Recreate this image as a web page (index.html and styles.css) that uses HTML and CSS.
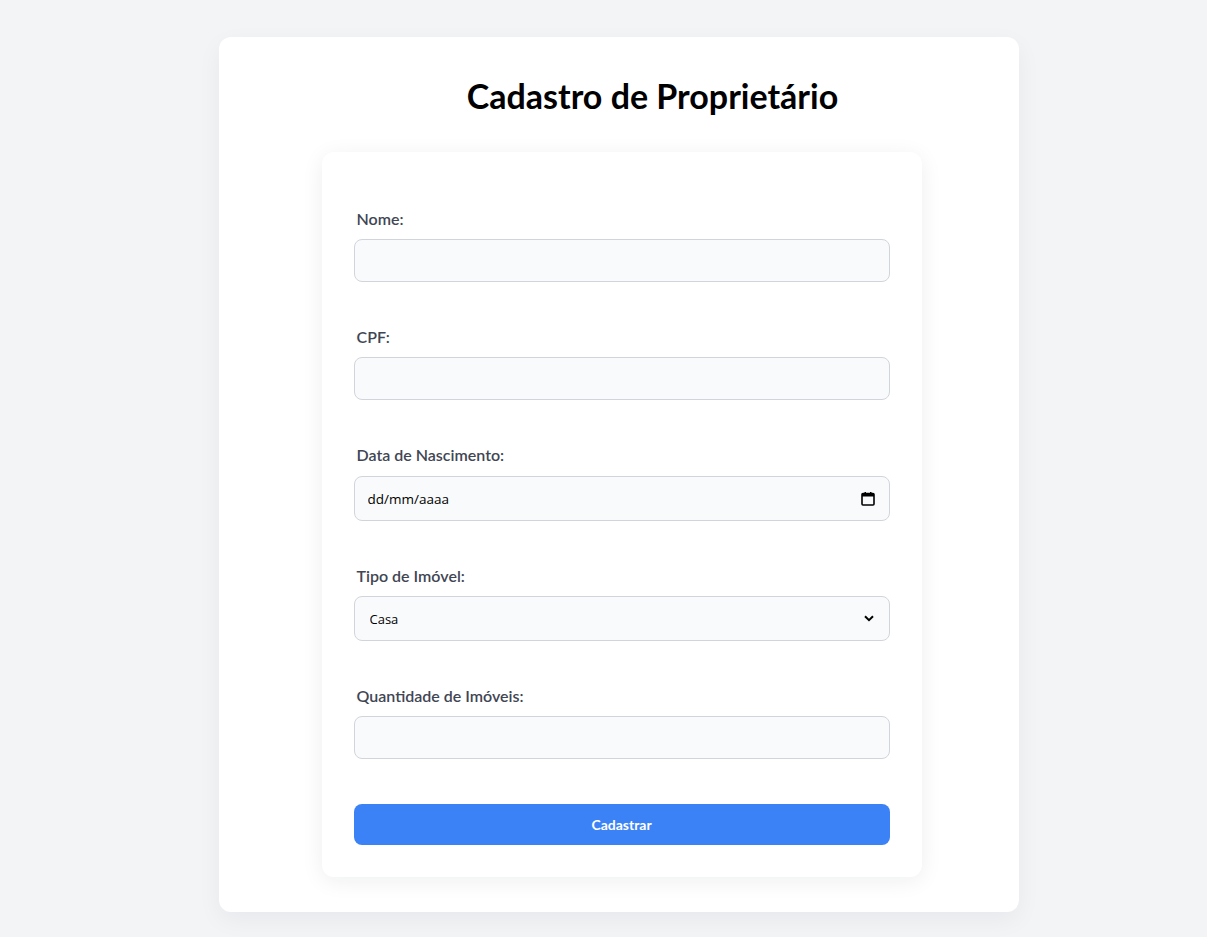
FILE: index.html
```html
<!DOCTYPE html>
<html lang="pt-BR">
<head>
<meta charset="utf-8">
<title>Cadastro de Proprietário</title>
<link rel="stylesheet" href="styles.css">
</head>
<body>
<main class="page">
  <section class="panel">
    <h1 class="title">Cadastro de Proprietário</h1>
    <form class="form-card">
      <div class="field">
        <label class="label" for="nome">Nome:</label>
        <input class="input" id="nome" type="text">
      </div>
      <div class="field">
        <label class="label" for="cpf">CPF:</label>
        <input class="input" id="cpf" type="text">
      </div>
      <div class="field">
        <label class="label" for="nasc">Data de Nascimento:</label>
        <div class="input input-tall input-wrap input-date">
          <input class="bare date-text" id="nasc" type="text" placeholder="dd/mm/aaaa">
          <svg class="cal-icon" width="14" height="14" viewBox="0 0 14 14" aria-hidden="true">
            <path d="M2 1.5h10a1 1 0 0 1 1 1v9.5a1 1 0 0 1-1 1H2a1 1 0 0 1-1-1V2.5a1 1 0 0 1 1-1z" fill="none" stroke="#000" stroke-width="1.6"/>
            <rect x="1" y="1.5" width="12" height="3" fill="#000"/>
            <rect x="3.5" y="0" width="1.5" height="2" fill="#000"/>
            <rect x="9" y="0" width="1.5" height="2" fill="#000"/>
          </svg>
        </div>
      </div>
      <div class="field">
        <label class="label" for="tipo">Tipo de Imóvel:</label>
        <div class="input input-tall input-wrap">
          <select class="bare select" id="tipo">
            <option>Casa</option>
            <option>Apartamento</option>
          </select>
          <svg class="chev-icon" width="10" height="7" viewBox="0 0 10 7" aria-hidden="true">
            <path d="M1 1.2l4 4 4-4" fill="none" stroke="#000" stroke-width="2"/>
          </svg>
        </div>
      </div>
      <div class="field">
        <label class="label" for="qtd">Quantidade de Imóveis:</label>
        <input class="input" id="qtd" type="text">
      </div>
      <button class="btn" type="button">Cadastrar</button>
    </form>
  </section>
</main>
</body>
</html>
```

FILE: styles.css
```css
* { box-sizing: border-box; }

html, body {
  margin: 0;
  padding: 0;
  background: #f3f4f6;
  font-family: "Lato", "Open Sans", sans-serif;
}

.page {
  display: flex;
  justify-content: center;
  padding: 37px 0 25px 30px;
}

.panel {
  width: 800px;
  background: #ffffff;
  border-radius: 12px;
  box-shadow: 0 8px 24px rgba(17, 24, 39, 0.05);
  padding: 38px 97px 35px 103px;
  display: flex;
  flex-direction: column;
  align-items: center;
}

.title {
  margin: 0 0 35px;
  padding-left: 62px;
  font-size: 34px;
  line-height: 42px;
  font-weight: 700;
  color: #000;
  text-align: center;
}

.form-card {
  width: 600px;
  background: #ffffff;
  border-radius: 12px;
  box-shadow: 0 4px 22px rgba(17, 24, 39, 0.07);
  padding: 32px;
  display: flex;
  flex-direction: column;
}

.field {
  display: flex;
  flex-direction: column;
  padding-top: 24px;
  margin-bottom: 20px;
}

.label {
  font-size: 16px;
  line-height: 22px;
  font-weight: 600;
  color: #3f4654;
  margin: 0 0 9px 3px;
}

.input {
  width: 100%;
  height: 43px;
  border: 1px solid #d1d5db;
  border-radius: 8px;
  background: #f9fafb;
  font-family: inherit;
  font-size: 14px;
  padding: 0 14px;
  outline: none;
}

.input-tall { height: 45px; }
.input-date { margin-top: 1px; }

.input-wrap {
  display: flex;
  align-items: center;
  padding: 0 13px 0 13px;
}

.bare {
  flex: 1;
  border: 0;
  background: transparent;
  outline: none;
  padding: 0;
  margin: 0;
  color: #000;
  font-size: 13.5px;
  font-family: "Open Sans", "Lato", sans-serif;
  height: 100%;
}

.date-text::placeholder { color: #000; opacity: 1; }

.select {
  appearance: none;
  -webkit-appearance: none;
  padding-left: 2px;
  font-size: 13px;
}

.cal-icon { flex: none; margin-right: 1px; }
.chev-icon { flex: none; margin-right: 2px; }

.btn {
  margin-top: 25px;
  height: 41px;
  border: 0;
  border-radius: 8px;
  background: #3b82f6;
  color: #fff;
  font-family: inherit;
  font-size: 14px;
  font-weight: 700;
}
```
